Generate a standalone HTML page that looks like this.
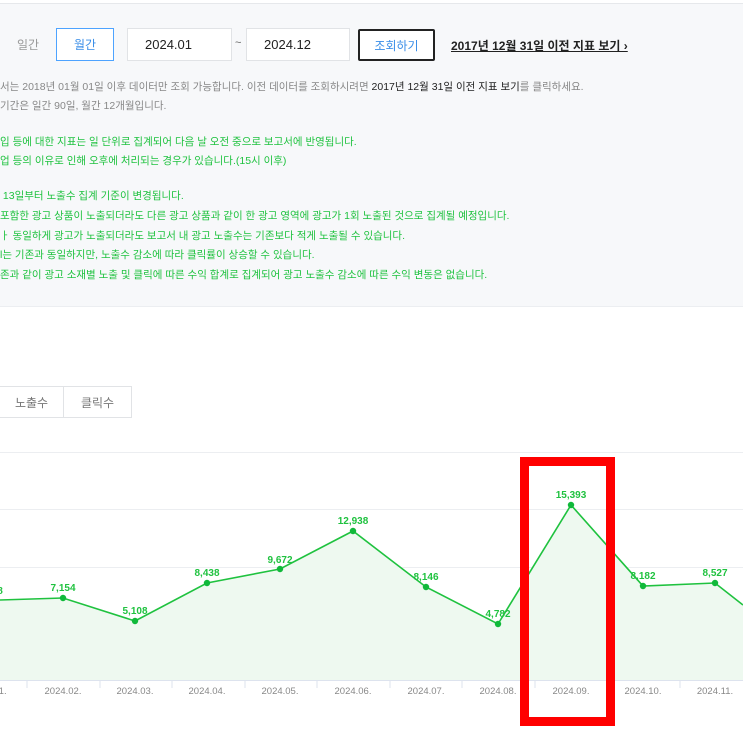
<!DOCTYPE html>
<html><head><meta charset="utf-8"><style>
body{margin:0;width:743px;height:743px;overflow:hidden;background:#fff;font-family:"Liberation Sans","Noto Sans CJK KR",sans-serif;position:relative}
.panel{position:absolute;left:0;top:3px;width:743px;height:302px;background:#f7f8fa;border-top:1px solid #e6e8eb;border-bottom:1px solid #eceef1}
.a{position:absolute;white-space:nowrap}
.box{position:absolute;background:#fff;border:1px solid #e1e3e6;box-sizing:border-box;font-size:13px;color:#222;display:flex;align-items:center}
.t{font-size:10.5px;color:#888;position:absolute;white-space:nowrap}
.g{color:#1fc23f}
</style></head><body>
<div class="panel"></div>
<div class="a" style="left:17px;top:36px;font-size:12px;color:#999">일간</div>
<div class="box" style="left:56px;top:28px;width:58px;height:33px;border-color:#4da3ff;color:#3a8ee8;justify-content:center;font-size:12px">월간</div>
<div class="box" style="left:127px;top:28px;width:105px;height:33px;padding-left:17px">2024.01</div>
<div class="a" style="left:235px;top:37px;font-size:11px;color:#666">~</div>
<div class="box" style="left:246px;top:28px;width:104px;height:33px;padding-left:17px">2024.12</div>
<div class="box" style="left:358px;top:29px;width:77px;height:32px;border:2px solid #222;border-radius:2px;color:#3a8ee8;justify-content:center;font-size:12px">조회하기</div>
<div class="a" style="left:451px;top:37px;font-size:12px;font-weight:bold;color:#222;text-decoration:underline">2017년 12월 31일 이전 지표 보기 ›</div>
<div class="t" style="top:79px">서는 2018년 01월 01일 이후 데이터만 조회 가능합니다. 이전 데이터를 조회하시려면 <span style="color:#222">2017년 12월 31일 이전 지표 보기</span>를 클릭하세요.</div>
<div class="t" style="top:98px">기간은 일간 90일, 월간 12개월입니다.</div>
<div class="t g" style="top:134px">입 등에 대한 지표는 일 단위로 집계되어 다음 날 오전 중으로 보고서에 반영됩니다.</div>
<div class="t g" style="top:153px">업 등의 이유로 인해 오후에 처리되는 경우가 있습니다.(15시 이후)</div>
<div class="t g" style="top:188px">&nbsp;13일부터 노출수 집계 기준이 변경됩니다.</div>
<div class="t g" style="top:208px">포함한 광고 상품이 노출되더라도 다른 광고 상품과 같이 한 광고 영역에 광고가 1회 노출된 것으로 집계될 예정입니다.</div>
<div class="t g" style="top:228px">ㅏ 동일하게 광고가 노출되더라도 보고서 내 광고 노출수는 기존보다 적게 노출될 수 있습니다.</div>
<div class="t g" style="top:247px">l는 기존과 동일하지만, 노출수 감소에 따라 클릭률이 상승할 수 있습니다.</div>
<div class="t g" style="top:267px">존과 같이 광고 소재별 노출 및 클릭에 따른 수익 합계로 집계되어 광고 노출수 감소에 따른 수익 변동은 없습니다.</div>
<div class="box" style="left:-1px;top:386px;width:65px;height:32px;justify-content:center;color:#777;font-size:12px">노출수</div>
<div class="box" style="left:63px;top:386px;width:69px;height:32px;justify-content:center;color:#777;font-size:12px">클릭수</div>
<svg class="a" style="left:0;top:0" width="743" height="743">
<g stroke="#eceef1" stroke-width="1"><line x1="0" y1="452.5" x2="743" y2="452.5"/><line x1="0" y1="509.5" x2="743" y2="509.5"/><line x1="0" y1="567.5" x2="743" y2="567.5"/><line x1="0" y1="624.5" x2="743" y2="624.5"/></g>
<line x1="0" y1="680.5" x2="743" y2="680.5" stroke="#dde3ee"/>
<g stroke="#dde3ee"><line x1="27" y1="680" x2="27" y2="688"/><line x1="100" y1="680" x2="100" y2="688"/><line x1="172" y1="680" x2="172" y2="688"/><line x1="245" y1="680" x2="245" y2="688"/><line x1="317" y1="680" x2="317" y2="688"/><line x1="390" y1="680" x2="390" y2="688"/><line x1="462" y1="680" x2="462" y2="688"/><line x1="535" y1="680" x2="535" y2="688"/><line x1="607" y1="680" x2="607" y2="688"/><line x1="680" y1="680" x2="680" y2="688"/></g>
<polygon fill="#eef9f0" points="0,600 63,598 135,621 207,583 280,569 353,531 426,587 498,624 571,505 643,586 715,583 743,605 743,680 0,680"/>
<polyline fill="none" stroke="#1fc23f" stroke-width="1.6" points="0,600 63,598 135,621 207,583 280,569 353,531 426,587 498,624 571,505 643,586 715,583 743,605"/>
<g fill="#10b93a"><circle cx="63" cy="598" r="3.2"/><circle cx="135" cy="621" r="3.2"/><circle cx="207" cy="583" r="3.2"/><circle cx="280" cy="569" r="3.2"/><circle cx="353" cy="531" r="3.2"/><circle cx="426" cy="587" r="3.2"/><circle cx="498" cy="624" r="3.2"/><circle cx="571" cy="505" r="3.2"/><circle cx="643" cy="586" r="3.2"/><circle cx="715" cy="583" r="3.2"/></g>
<g fill="#1fc23f" font-size="10" font-weight="bold" text-anchor="middle" font-family="Liberation Sans,sans-serif"><text x="0" y="594">8</text><text x="63" y="591">7,154</text><text x="135" y="614">5,108</text><text x="207" y="576">8,438</text><text x="280" y="563">9,672</text><text x="353" y="524">12,938</text><text x="426" y="580">8,146</text><text x="498" y="617">4,782</text><text x="571" y="498">15,393</text><text x="643" y="579">8,182</text><text x="715" y="576">8,527</text></g>
<g fill="#888" font-size="9.5" text-anchor="middle" font-family="Liberation Sans,sans-serif"><text x="0" y="694">01.</text><text x="63" y="694">2024.02.</text><text x="135" y="694">2024.03.</text><text x="207" y="694">2024.04.</text><text x="280" y="694">2024.05.</text><text x="353" y="694">2024.06.</text><text x="426" y="694">2024.07.</text><text x="498" y="694">2024.08.</text><text x="571" y="694">2024.09.</text><text x="643" y="694">2024.10.</text><text x="715" y="694">2024.11.</text></g>
<rect x="524.5" y="461.5" width="86" height="260" fill="none" stroke="#ff0000" stroke-width="9"/>
</svg>
</body></html>
